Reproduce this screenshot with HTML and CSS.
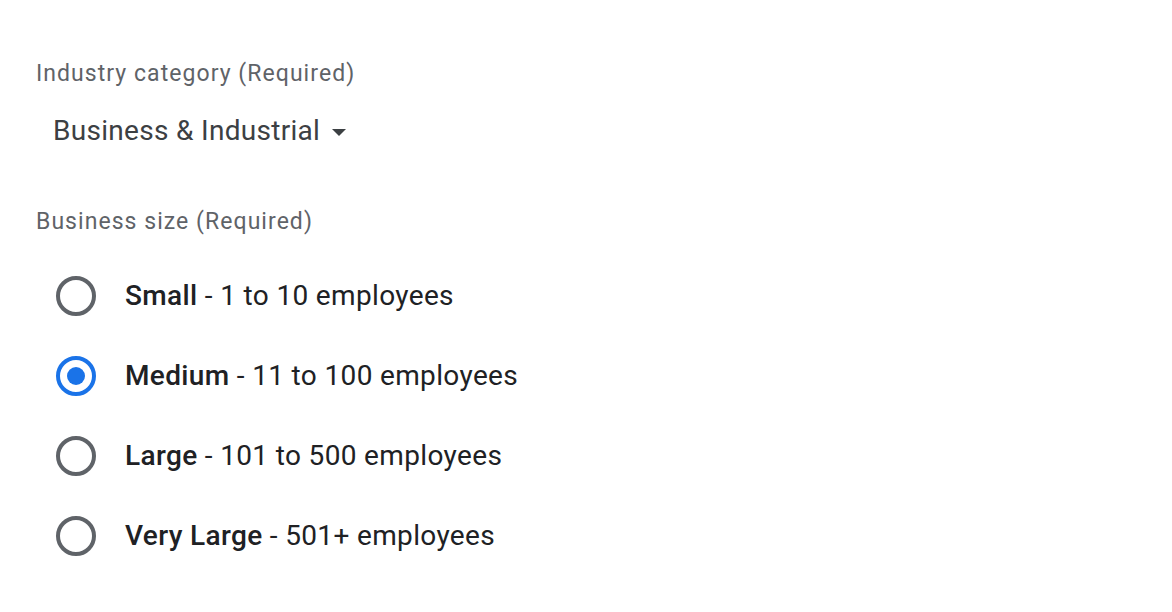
FILE: index.html
```html
<!DOCTYPE html>
<html>
<head>
<meta charset="utf-8">
<link rel="stylesheet" href="styles.css">
</head>
<body>
<div class="form">
  <div class="label">Industry category (Required)</div>
  <div class="select">
    <span class="select-text">Business &amp; Industrial</span>
    <svg class="arrow" width="14" height="7" viewBox="0 0 14 7"><path d="M0 0h14L7 7z" fill="#3c4043"/></svg>
  </div>
  <div class="label label-size">Business size (Required)</div>
  <div class="radios">
    <div class="row"><span class="radio"></span><span class="text"><b>Small</b> - 1 to 10 employees</span></div>
    <div class="row"><span class="radio checked"></span><span class="text"><b>Medium</b> - 11 to 100 employees</span></div>
    <div class="row"><span class="radio"></span><span class="text"><b>Large</b> - 101 to 500 employees</span></div>
    <div class="row"><span class="radio"></span><span class="text"><b>Very Large</b> - 501+ employees</span></div>
  </div>
</div>
</body>
</html>
```
FILE: styles.css
```css
html, body {
  margin: 0;
  background: #ffffff;
}
body {
  font-family: Roboto, "Liberation Sans", sans-serif;
  -webkit-font-smoothing: antialiased;
}
.form {
  padding: 60px 0 0 36px;
}
.label {
  font-size: 23px;
  line-height: 28px;
  color: #5f6368;
  letter-spacing: 1.05px;
}
.select {
  margin-top: 25px;
  padding-left: 17px;
  height: 36px;
  display: flex;
  align-items: center;
  gap: 12px;
  color: #3c4043;
  font-size: 28px;
  line-height: 36px;
  letter-spacing: 0.3px;
}
.arrow {
  display: block;
  margin-top: 2px;
}
.label-size {
  margin-top: 59px;
}
.radios {
  margin-top: 20px;
  display: flex;
  flex-direction: column;
}
.row {
  height: 80px;
  display: flex;
  align-items: center;
  padding-left: 20px;
  gap: 29px;
}
.radio {
  width: 40px;
  height: 40px;
  box-sizing: border-box;
  border: 4px solid #5f6368;
  border-radius: 50%;
  display: flex;
  align-items: center;
  justify-content: center;
  flex: none;
}
.radio.checked {
  border-color: #1a73e8;
}
.radio.checked::after {
  content: "";
  width: 18px;
  height: 18px;
  border-radius: 50%;
  background: #1a73e8;
}
.text {
  font-size: 28px;
  line-height: 36px;
  color: #202124;
  letter-spacing: 0.35px;
}
.text b {
  font-weight: 500;
}
```
